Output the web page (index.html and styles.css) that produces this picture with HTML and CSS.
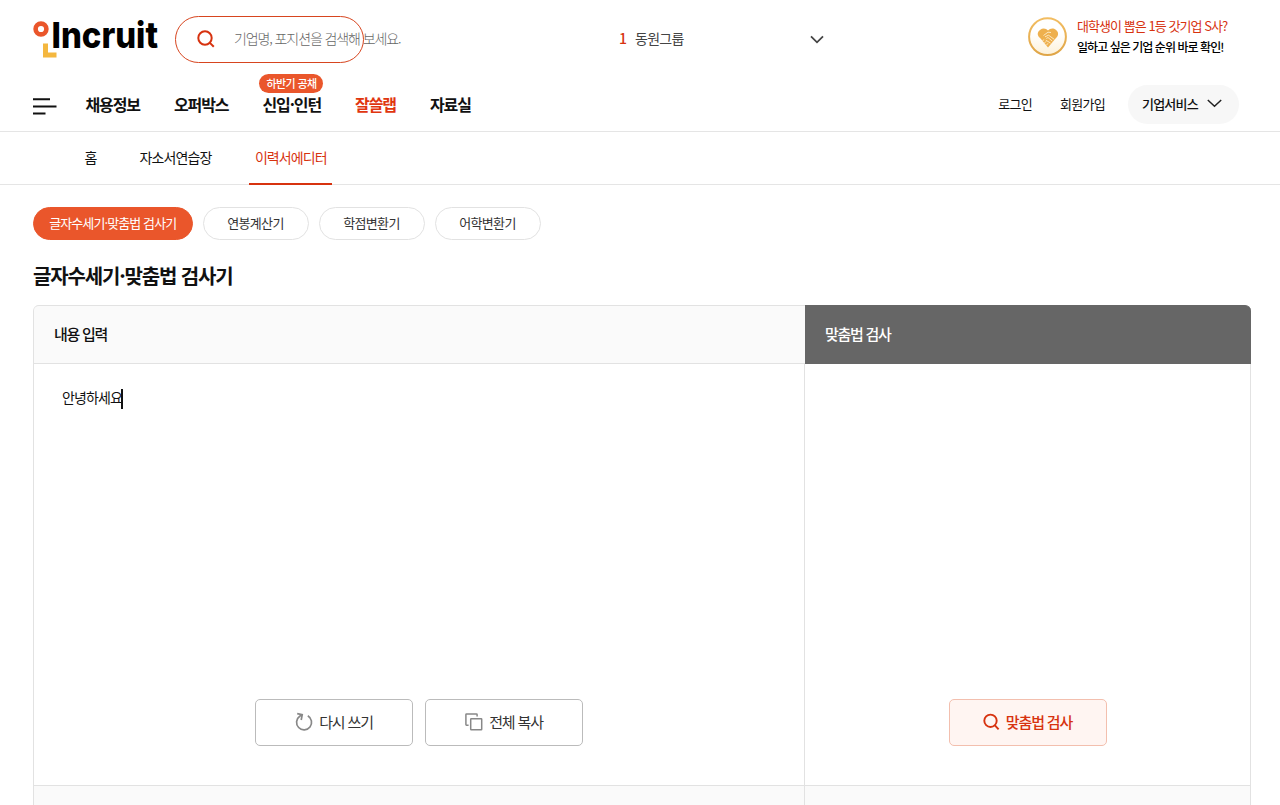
FILE: index.html
```html
<!DOCTYPE html>
<html lang="ko">
<head>
<meta charset="utf-8">
<title>글자수세기·맞춤법 검사기</title>
<link rel="stylesheet" href="styles.css">
</head>
<body>
<header class="header">
  <div class="top">
    <svg class="logo" width="128" height="42" viewBox="0 0 128 42">
      <circle cx="8" cy="10" r="5.400" fill="none" stroke="#ea562b" stroke-width="4.600"/>
      <path d="M10 24.500h5v9h8.500v5H10z" fill="#f4b73f"/>
      <text class="logo-text" x="18.500" y="28.500" textLength="106.500" lengthAdjust="spacingAndGlyphs">Incruit</text>
    </svg>
    <div class="search">
      <svg class="search-icon" width="18" height="18" viewBox="0 0 18 18" fill="none" stroke="#d7320f" stroke-width="2"><circle cx="8" cy="8" r="6.700"/><path d="M12.600 12.600 16.800 16.800"/></svg>
      <span class="placeholder">기업명, 포지션을 검색해 보세요.</span>
    </div>
    <div class="rank"><b class="rank-no">1</b><span class="rank-name">동원그룹</span>
      <svg class="rank-arrow" width="14" height="9" viewBox="0 0 14 9" fill="none" stroke="#444" stroke-width="1.800"><path d="M1 1.300 7 7.300 13 1.300"/></svg>
    </div>
    <div class="banner">
      <svg width="40" height="40" viewBox="0 0 40 40">
        <defs><linearGradient id="ring" x1="0" y1="0" x2="0" y2="1"><stop offset="0" stop-color="#f2bd62"/><stop offset="1" stop-color="#dfa547"/></linearGradient>
        <linearGradient id="disc" x1="0" y1="0" x2="0" y2="1"><stop offset=".4" stop-color="#fff"/><stop offset="1" stop-color="#fdf1d8"/></linearGradient></defs>
        <circle cx="19.500" cy="19.700" r="18.400" fill="url(#disc)" stroke="url(#ring)" stroke-width="2"/>
        <path d="M20 13.600c-2-2.600-5.500-2.700-7.700-.8-3.600 2.500-3.200 6 0 8.500l7.700 9.200 7.800-9.200c3-2.600 3.200-6.100 0-8.500-2.200-1.900-5.700-1.800-7.800.8z" fill="#eeb04e"/>
        <path d="M15.500 18.500l4.500-3.300 3 .3M17 19.800l3.500-1.600 5.800 4.200M18.300 21.500l1.700-1 4.300 3.600M17.800 23.200l4.700 2.800M16.200 22.500l-2 1.600M18.200 24.300l-2 2M20 26.300l-1.600 2" fill="none" stroke="#fff4dc" stroke-width=".8"/>
      </svg>
      <div class="banner-text"><span class="banner-red">대학생이 뽑은 1등 갓기업 S사?</span><span class="banner-black">일하고 싶은 기업 순위 바로 확인!</span></div>
    </div>
  </div>
  <nav class="nav">
    <svg class="burger" width="24" height="17" viewBox="0 0 24 17" stroke="#111" stroke-width="1.900"><path d="M0 1.200h17M0 8.500h23.500M0 15.500h12.500"/></svg>
    <a class="menu">채용정보</a>
    <a class="menu">오퍼박스</a>
    <a class="menu menu-new">신입·인턴<span class="badge">하반기 공채</span></a>
    <a class="menu active">잘쓸랩</a>
    <a class="menu">자료실</a>
    <div class="account">
      <a class="login">로그인</a>
      <a class="join">회원가입</a>
      <a class="biz">기업서비스<svg width="15" height="9" viewBox="0 0 15 9" fill="none" stroke="#222" stroke-width="1.500"><path d="M.8 1 7.500 7.300 14.200 1"/></svg></a>
    </div>
  </nav>
</header>
<nav class="subnav">
  <a class="sub home">홈</a>
  <a class="sub practice">자소서연습장</a>
  <a class="sub current">이력서에디터</a>
</nav>
<main class="main">
  <div class="pills">
    <a class="pill pill-on">글자수세기·맞춤법 검사기</a>
    <a class="pill">연봉계산기</a>
    <a class="pill">학점변환기</a>
    <a class="pill">어학변환기</a>
  </div>
  <h1 class="title">글자수세기·맞춤법 검사기</h1>
  <div class="panel">
    <section class="col">
      <h2 class="head">내용 입력</h2>
      <div class="body">
        <div class="text"><span class="typed">안녕하세요</span><i class="caret"></i></div>
        <div class="buttons">
          <a class="btn"><svg width="18" height="20" viewBox="0 0 18 20" fill="none" stroke="#888" stroke-width="1.700"><path d="M12.800 3.800A7.500 7.500 0 1 1 4.700 4.200L7 2.800"/><path d="M2.200 1.700 7.200 2.700 6.200 8"/></svg>다시 쓰기</a>
          <a class="btn"><svg width="18" height="18" viewBox="0 0 18 18" fill="none" stroke="#888" stroke-width="1.500"><rect x="5.700" y="5.700" width="11" height="11" rx=".5"/><path d="M3.600 12.200H1.500a.6.600 0 0 1-.6-.6V1.500a.6.600 0 0 1 .6-.6h10a.6.600 0 0 1 .6.600V3.600"/></svg>전체 복사</a>
        </div>
      </div>
      <div class="foot"></div>
    </section>
    <section class="col col-right">
      <h2 class="head head-dark">맞춤법 검사</h2>
      <div class="body">
        <div class="text"></div>
        <div class="buttons">
          <a class="btn btn-red"><svg width="17" height="18" viewBox="0 0 17 18" fill="none" stroke="#d7320f" stroke-width="1.900"><circle cx="7.500" cy="7.800" r="6.200"/><path d="M11.700 12.200 15.600 16.400"/></svg>맞춤법 검사</a>
        </div>
      </div>
      <div class="foot"></div>
    </section>
  </div>
</main>
</body>
</html>
```

FILE: styles.css
```css
* { box-sizing: border-box; }
body {
  margin: 0;
  height: 805px;
  overflow: hidden;
  background: #fff;
  color: #111;
  font-family: "Noto Sans CJK KR", sans-serif;
  font-size: 14px;
  line-height: 20px;
  white-space: nowrap;
}
svg { display: block; flex: none; }
.header { height: 132px; border-bottom: 1px solid #e5e5e5; }
.top { display: flex; height: 80px; padding-left: 33px; align-items: flex-start; }
.logo { margin-top: 19px; overflow: visible; }
.logo-text { font: 800 36px Inter, sans-serif; fill: #000; }
.search {
  display: flex;
  align-items: center;
  width: 189px;
  height: 47px;
  margin: 16px 0 0 14px;
  padding: 0 0 1px 21px;
  border: 1px solid #d7451f;
  border-radius: 24px;
}
.placeholder { margin: -3px 0 0 19px; color: #666; letter-spacing: -1.1px; font-weight: 300; }
.rank { display: flex; align-items: center; width: 205px; height: 20px; margin: 28px 0 0 255px; }
.rank-no { width: 16px; color: #d7320f; font-weight: 500; }
.rank-name { color: #444; letter-spacing: -0.7px; }
.rank-arrow { margin: 2px 0 0 auto; }
.banner { display: flex; margin: 17px 0 0 204px; }
.banner-text { display: flex; flex-direction: column; margin: -2px 0 0 9px; font-weight: 500; }
.banner-red { color: #d7320f; font-size: 13px; font-weight: 400; letter-spacing: -0.95px; line-height: 21px; }
.banner-black { font-size: 12px; letter-spacing: -0.95px; line-height: 21px; color: #000; }
.nav { display: flex; align-items: center; height: 48px; padding-left: 33px; }
.burger { margin: 4px 28.5px 0 0; }
.menu { position: relative; margin-right: 34px; font-size: 16px; font-weight: 700; letter-spacing: -1.1px; }
.active { color: #e0360f; }
.badge {
  position: absolute;
  top: -20px;
  left: -3px;
  width: 64px;
  height: 19px;
  border-radius: 10px;
  background: #ea562b;
  color: #fff;
  font-size: 11px;
  font-weight: 500;
  line-height: 18px;
  letter-spacing: -0.6px;
  text-align: center;
}
.account { display: flex; align-items: center; margin: 0 41px 0 auto; font-size: 13px; letter-spacing: -0.7px; }
.login { margin-right: 28px; }
.join { margin-right: 23px; }
.biz {
  display: flex;
  align-items: center;
  gap: 9px;
  width: 111px;
  padding-left: 14px;
  height: 39px;
  border-radius: 20px;
  background: #f7f7f7;
  font-weight: 500;
  letter-spacing: -0.8px;
}
.biz svg { margin-top: -1px; }
.subnav { display: flex; height: 53px; border-bottom: 1px solid #e5e5e5; padding-left: 84.5px; }
.sub { height: 53px; line-height: 50px; letter-spacing: -0.9px; }
.practice { margin: 0 37.5px 0 43px; }
.current { width: 83px; padding-left: 6px; color: #d7320f; border-bottom: 2px solid #d7320f; }
.main { padding: 22px 29px 0 33px; }
.pills { display: flex; gap: 10px; }
.pill {
  width: 106px;
  height: 33px;
  border: 1px solid #e2e2e2;
  border-radius: 17px;
  color: #333;
  font-size: 13px;
  letter-spacing: -0.7px;
  line-height: 29px;
  text-align: center;
}
.pill-on { width: 159.5px; background: #ea562b; border-color: #ea562b; color: #fff; letter-spacing: -0.9px; }
.title { margin: 20px 0 14px; font-size: 20px; font-weight: 700; line-height: 31px; letter-spacing: -1.15px; color: #111; }
.panel { display: grid; grid-template-columns: 772px 446px; width: 1218px; }
.col { border-left: 1px solid #e2e2e2; border-radius: 6px 0 0; }
.col-right { border: 0; border-right: 1px solid #e2e2e2; border-radius: 0 6px 0 0; }
.head {
  height: 59px;
  margin: 0;
  padding-left: 20px;
  border: solid #e2e2e2;
  border-width: 1px 0;
  border-radius: 5px 0 0;
  background: #fafafa;
  font-size: 15px;
  font-weight: 500;
  line-height: 55px;
  letter-spacing: -1.3px;
}
.head-dark { margin-right: -1px; border-color: #666; border-radius: 0 6px 0 0; background: #666; color: #fff; }
.body { display: flex; flex-direction: column; height: 421px; padding: 24px 28px 39px; border-right: 1px solid #e2e2e2; }
.col-right .body, .col-right .foot { border-right: 0; }
.text { display: flex; flex: 1; }
.typed { margin-top: -1px; letter-spacing: -0.9px; }
.caret { width: 2px; height: 20px; margin: 1px 0 0 -1px; background: #111; }
.buttons { display: flex; justify-content: center; gap: 12px; }
.btn {
  display: flex;
  align-items: center;
  justify-content: center;
  gap: 6px;
  width: 158px;
  height: 47px;
  padding-bottom: 2px;
  border: 1px solid #bbb;
  border-radius: 5px;
  color: #333;
  font-size: 15px;
  letter-spacing: -1.15px;
}
.btn svg { margin-top: 1px; }
.btn-red { border-color: #f3bfae; background: #fff5f2; color: #d7320f; font-weight: 500; }
.foot { height: 30px; border-top: 1px solid #e2e2e2; border-right: 1px solid #e2e2e2; background: #fafafa; }
```
